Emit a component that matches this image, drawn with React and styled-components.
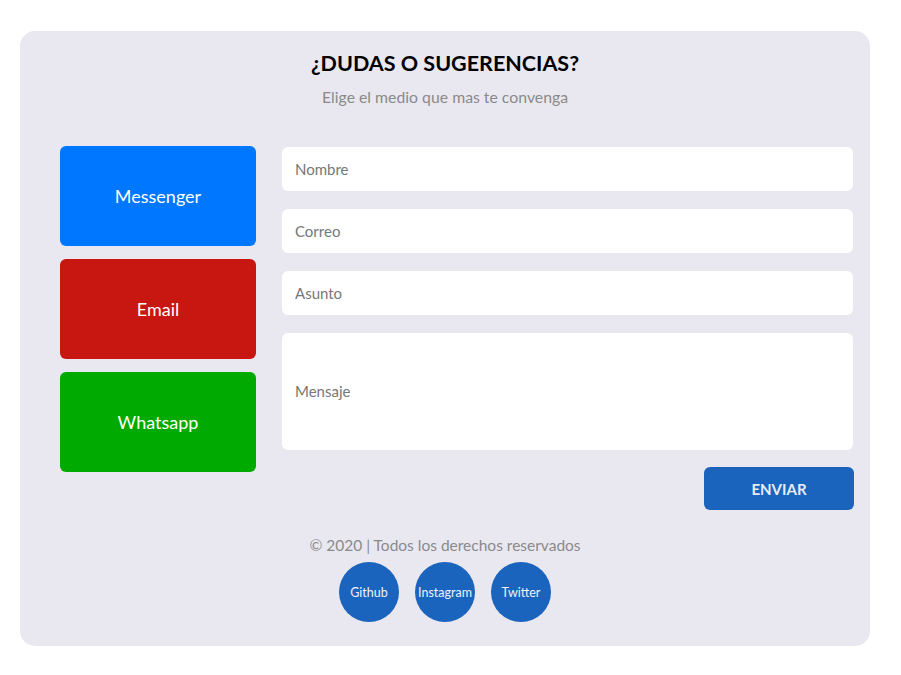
import React from 'react';
import styled, { createGlobalStyle } from 'styled-components';

const GlobalStyle = createGlobalStyle`
  body {
    margin: 0;
    background: #ffffff;
    font-family: Lato, "Liberation Sans", sans-serif;
  }
`;

const channels = [
  { name: 'Messenger', color: '#0077ff' },
  { name: 'Email', color: '#c81611' },
  { name: 'Whatsapp', color: '#00aa00' },
];

const fields = ['Nombre', 'Correo', 'Asunto'];

const socials = ['Github', 'Instagram', 'Twitter'];

const App = () => {
  return (
    <Page>
      <GlobalStyle />
      <Card>
        <Title>¿DUDAS O SUGERENCIAS?</Title>
        <Subtitle>Elige el medio que mas te convenga</Subtitle>
        <Body>
          <Channels>
            {channels.map((c) => (
              <ChannelButton key={c.name} $bg={c.color}>{c.name}</ChannelButton>
            ))}
          </Channels>
          <Form onSubmit={(e) => e.preventDefault()}>
            {fields.map((f) => (
              <Input key={f} placeholder={f} />
            ))}
            <Message placeholder="Mensaje" />
            <SendRow>
              <SendButton type="submit">ENVIAR</SendButton>
            </SendRow>
          </Form>
        </Body>
        <Footer>
          <Copy>© 2020 | Todos los derechos reservados</Copy>
          <Socials>
            {socials.map((s) => (
              <SocialLink key={s} href="#">{s}</SocialLink>
            ))}
          </Socials>
        </Footer>
      </Card>
    </Page>
  );
};

const Page = styled.div`
  padding: 31px 0 0 20px;
`;

const Card = styled.div`
  width: 850px;
  box-sizing: border-box;
  background-color: #e9e8f1;
  border-radius: 15px;
  padding: 18px 0 24px 0;
  display: flex;
  flex-direction: column;
  align-items: center;
`;

const Title = styled.h1`
  margin: 0;
  font-size: 21.5px;
  line-height: 28px;
  font-weight: 700;
  color: #000;
`;

const Subtitle = styled.p`
  margin: 10px 0 0 0;
  font-size: 15.8px;
  line-height: 20px;
  color: #8a8a8a;
`;

const Body = styled.div`
  align-self: stretch;
  margin: 39px 16px 0 40px;
  display: grid;
  grid-template-columns: 196px 1fr;
  column-gap: 26px;
  align-items: start;
`;

const Channels = styled.div`
  display: flex;
  flex-direction: column;
  gap: 13px;
`;

const ChannelButton = styled.button`
  height: 100px;
  border: none;
  border-radius: 6px;
  background-color: ${(p) => p.$bg};
  color: #fff;
  font-family: inherit;
  font-size: 18px;
  cursor: pointer;
`;

const Form = styled.form`
  display: flex;
  flex-direction: column;
  gap: 18px;
  padding-top: 1px;
`;

const Input = styled.input`
  height: 44px;
  box-sizing: border-box;
  margin-right: 1px;
  border: none;
  border-radius: 6px;
  background: #fff;
  padding: 0 13px;
  font-family: inherit;
  font-size: 15px;
  color: #333;
  outline: none;

  &::placeholder {
    color: #777;
  }
`;

const Message = styled.textarea`
  height: 117px;
  box-sizing: border-box;
  margin-right: 1px;
  border: none;
  border-radius: 6px;
  background: #fff;
  padding: 49px 13px 0;
  font-family: inherit;
  font-size: 15px;
  resize: none;
  outline: none;

  &::placeholder {
    color: #777;
  }
`;

const SendRow = styled.div`
  display: flex;
  justify-content: flex-end;
  margin-top: -1px;
`;

const SendButton = styled.button`
  width: 150px;
  height: 43px;
  border: none;
  border-radius: 6px;
  background-color: #1a64bd;
  color: #e8ecf6;
  font-family: inherit;
  font-size: 15px;
  font-weight: 700;
  cursor: pointer;
`;

const Footer = styled.div`
  margin-top: 25px;
  display: flex;
  flex-direction: column;
  align-items: center;
  gap: 7px;
`;

const Copy = styled.p`
  margin: 0;
  font-size: 15.5px;
  line-height: 20px;
  color: #8a8a8a;
`;

const Socials = styled.div`
  display: flex;
  gap: 16px;
`;

const SocialLink = styled.a`
  width: 60px;
  height: 60px;
  border-radius: 50%;
  background-color: #1a64bd;
  color: #eef2fa;
  font-size: 12.5px;
  text-decoration: none;
  display: flex;
  align-items: center;
  justify-content: center;
`;

export default App;
